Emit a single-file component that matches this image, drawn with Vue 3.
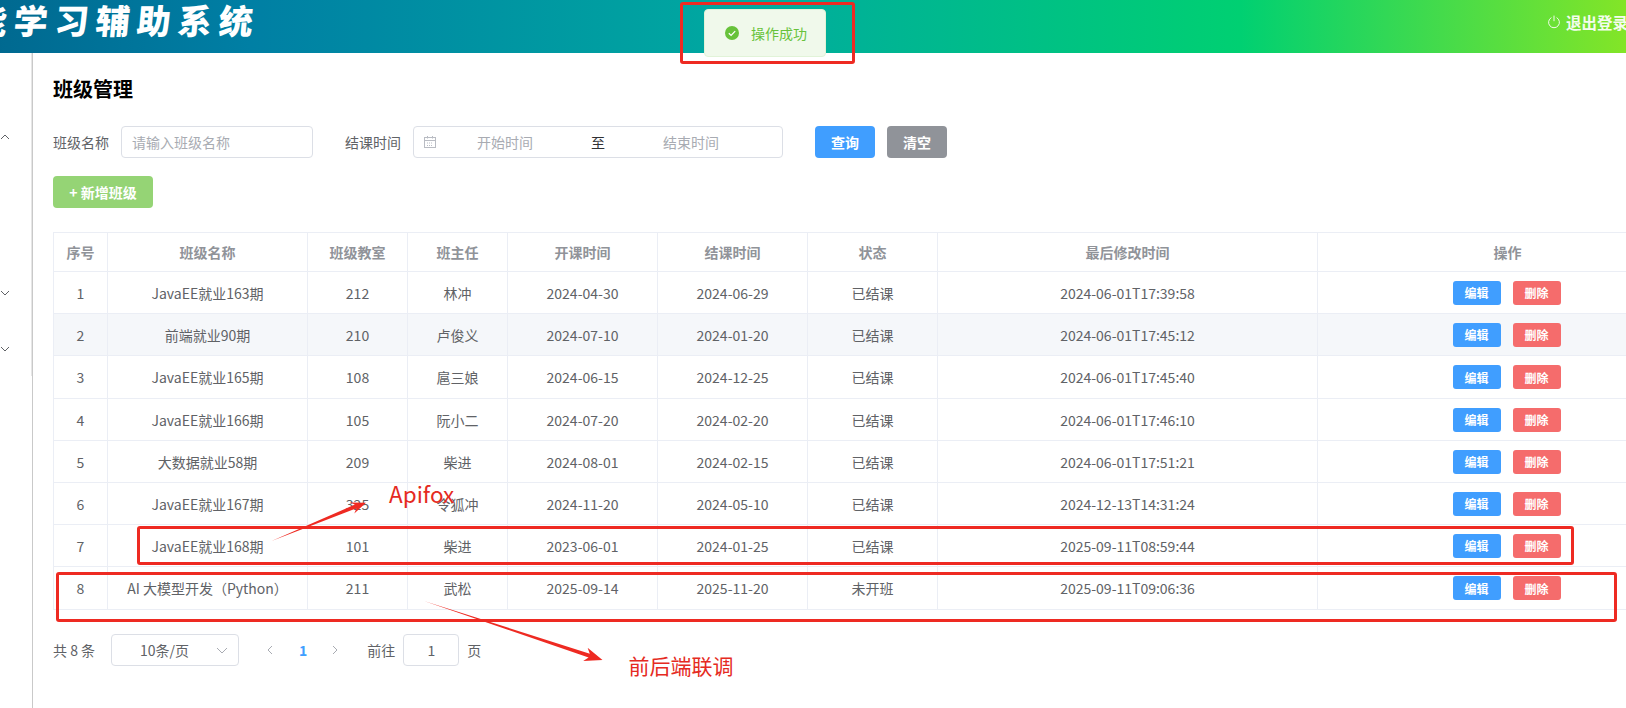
<template>
  <div class="page">
    <header class="header">
      <h1 class="brand">智能学习辅助系统</h1>
      <a class="logout">
        <svg class="power" viewBox="0 0 14 14" width="14" height="14">
          <path d="M4.4 2.6a5.4 5.4 0 1 0 5.2 0" />
          <path d="M7 0.6v5.6" />
        </svg>
        退出登录
      </a>
    </header>

    <div class="body">
      <aside class="aside">
        <svg class="chev first" viewBox="0 0 10 6" width="10" height="6"><path d="M1 5l4-4 4 4" /></svg>
        <svg class="chev second" viewBox="0 0 10 6" width="10" height="6"><path d="M1 1l4 4 4-4" /></svg>
        <svg class="chev third" viewBox="0 0 10 6" width="10" height="6"><path d="M1 1l4 4 4-4" /></svg>
      </aside>

      <main class="main">
        <h2 class="title">班级管理</h2>

        <div class="search">
          <label class="lbl">班级名称</label>
          <div class="input name-input">请输入班级名称</div>
          <label class="lbl">结课时间</label>
          <div class="range">
            <svg class="cal" viewBox="0 0 14 14" width="14" height="14">
              <rect x="1.5" y="2.5" width="11" height="10" />
              <path d="M1.5 5.5h11M4.5 1v2.5M9.500 1v2.500" />
              <path class="dots" d="M4 8h6M4 10.500h6" />
            </svg>
            <span class="range-start">开始时间</span>
            <span class="range-sep">至</span>
            <span class="range-end">结束时间</span>
          </div>
          <button class="btn primary">查询</button>
          <button class="btn gray">清空</button>
        </div>

        <button class="btn add">+ 新增班级</button>

        <table class="grid">
          <colgroup>
            <col v-for="w in colWidths" :key="w.id" :style="{ width: w.px + 'px' }" />
          </colgroup>
          <thead>
            <tr>
              <th v-for="h in heads" :key="h">{{ h }}</th>
            </tr>
          </thead>
          <tbody>
            <tr v-for="(r, i) in rows" :key="i" :class="{ striped: i === 1, tall: i === 2 || i === 7 }">
              <td>{{ i + 1 }}</td>
              <td>{{ r[0] }}</td>
              <td>{{ r[1] }}</td>
              <td>{{ r[2] }}</td>
              <td>{{ r[3] }}</td>
              <td>{{ r[4] }}</td>
              <td>{{ r[5] }}</td>
              <td>{{ r[6] }}</td>
              <td>
                <div class="ops">
                  <button class="mini edit">编辑</button>
                  <button class="mini del">删除</button>
                </div>
              </td>
            </tr>
          </tbody>
        </table>

        <div class="pager">
          <span>共 8 条</span>
          <div class="size">
            <span>10条/页</span>
            <svg class="size-chev" viewBox="0 0 12 7" width="12" height="7"><path d="M1 1l5 5 5-5" /></svg>
          </div>
          <svg class="nav prev" viewBox="0 0 6 10" width="6" height="10"><path d="M5 1L1 5l4 4" /></svg>
          <span class="cur">1</span>
          <svg class="nav next" viewBox="0 0 6 10" width="6" height="10"><path d="M1 1l4 4-4 4" /></svg>
          <span class="goto">前往</span>
          <div class="jump">1</div>
          <span class="unit">页</span>
        </div>
      </main>
    </div>

    <!-- toast and the red marks drawn on top of the screenshot -->
    <div class="toast">
      <svg viewBox="0 0 14 14" width="14" height="14">
        <circle cx="7" cy="7" r="7" fill="#67c23a" />
        <path d="M3.800 7.200l2.300 2.200 4.100-4.300" fill="none" stroke="#fff" stroke-width="1.300" />
      </svg>
      <span>操作成功</span>
    </div>
    <div class="mark mark-toast"></div>
    <div class="mark mark-row7"></div>
    <div class="mark mark-row8"></div>
    <svg class="arrows" viewBox="0 0 1626 708" width="1626" height="708">
      <polygon points="271.500,541 354.900,504.600 349.700,502.500 366,502.700 354.300,513.500 356.500,508.300" />
      <polygon points="424,601 589.800,653.700 587.600,647.700 602.500,660 583.200,660.900 588.600,657.500" />
    </svg>
    <span class="note note-api">Apifox</span>
    <span class="note note-fe">前后端联调</span>
  </div>
</template>

<script setup>
const colWidths = [54, 200, 100, 100, 150, 150, 130, 380, 380].map((px, id) => ({ id, px }))

const heads = ['序号', '班级名称', '班级教室', '班主任', '开课时间', '结课时间', '状态', '最后修改时间', '操作']

const rows = [
  ['JavaEE就业163期', '212', '林冲', '2024-04-30', '2024-06-29', '已结课', '2024-06-01T17:39:58'],
  ['前端就业90期', '210', '卢俊义', '2024-07-10', '2024-01-20', '已结课', '2024-06-01T17:45:12'],
  ['JavaEE就业165期', '108', '扈三娘', '2024-06-15', '2024-12-25', '已结课', '2024-06-01T17:45:40'],
  ['JavaEE就业166期', '105', '阮小二', '2024-07-20', '2024-02-20', '已结课', '2024-06-01T17:46:10'],
  ['大数据就业58期', '209', '柴进', '2024-08-01', '2024-02-15', '已结课', '2024-06-01T17:51:21'],
  ['JavaEE就业167期', '325', '令狐冲', '2024-11-20', '2024-05-10', '已结课', '2024-12-13T14:31:24'],
  ['JavaEE就业168期', '101', '柴进', '2023-06-01', '2024-01-25', '已结课', '2025-09-11T08:59:44'],
  ['AI 大模型开发（Python）', '211', '武松', '2025-09-14', '2025-11-20', '未开班', '2025-09-11T09:06:36']
]
</script>

<style>
html,
body {
  margin: 0;
  background: #fff;
}
</style>

<style scoped>
.page {
  position: relative;
  width: 1626px;
  height: 708px;
  overflow: hidden;
  font-family: "Noto Sans CJK SC", "Noto Sans", sans-serif;
  font-size: 14px;
  color: #606266;
  background: #fff;
}

.header {
  display: flex;
  align-items: center;
  width: 1980px;
  height: 53px;
  margin-left: -245px;
  background: linear-gradient(to right, #00547d, #007fa4, #00aaa0, #00d072, #a8eb12);
}
.brand {
  margin: 0 0 14px 177px;
  font-size: 34px;
  font-weight: 900;
  letter-spacing: 7px;
  white-space: nowrap;
  line-height: 53px;
  color: #fff;
  transform: skewX(-5deg);
}
.logout {
  display: flex;
  align-items: center;
  gap: 5px;
  margin-left: auto;
  margin-right: 107px;
  margin-top: -9px;
  font-size: 15.500px;
  font-weight: 700;
  color: #fff;
  opacity: 0.92;
  white-space: nowrap;
}
.power path {
  fill: none;
  stroke: #fff;
  stroke-width: 1;
}

.body {
  display: flex;
  align-items: flex-start;
}
.aside {
  display: flex;
  flex-direction: column;
  align-items: flex-start;
  box-sizing: border-box;
  width: 32px;
  height: 323px;
  border-right: 1px solid #e6e6e6;
}
.chev path {
  fill: none;
  stroke: #606266;
  stroke-width: 1;
}
.chev.first {
  margin-top: 81px;
}
.chev.second {
  margin-top: 150px;
}
.chev.third {
  margin-top: 50px;
}

.main {
  box-sizing: border-box;
  width: 1594px;
  min-height: 655px;
  padding: 24px 0 0 20px;
  border-left: 1px solid #c9c9c9;
}
.title {
  margin: 0 0 25px;
  font-size: 20px;
  line-height: 24px;
  font-weight: 700;
  color: #000;
}

.search {
  display: flex;
  align-items: center;
  height: 32px;
}
.lbl {
  width: 56px;
  margin-right: 12px;
  white-space: nowrap;
}
.input {
  box-sizing: border-box;
  width: 192px;
  height: 32px;
  margin-right: 32px;
  padding: 0 10px;
  border: 1px solid #dcdfe6;
  border-radius: 4px;
  line-height: 30px;
  color: #a8abb2;
}
.range {
  position: relative;
  display: flex;
  align-items: center;
  box-sizing: border-box;
  width: 370px;
  height: 32px;
  margin-right: 32px;
  border: 1px solid #dcdfe6;
  border-radius: 4px;
  color: #a8abb2;
}
.cal {
  margin-left: 9px;
}
.cal rect,
.cal path {
  fill: none;
  stroke: #b9bcc3;
  stroke-width: 1;
}
.cal .dots {
  stroke-dasharray: 1 1;
}
.range-start {
  margin-left: 40px;
}
.range-sep {
  margin-left: 58px;
  color: #303133;
}
.range-end {
  margin-left: 58px;
}

.btn {
  box-sizing: border-box;
  height: 32px;
  border: 0;
  border-radius: 4px;
  font: inherit;
  font-weight: 700;
  color: #fff;
  padding: 0;
}
.btn.primary {
  width: 60px;
  margin-right: 12px;
  background: #409eff;
}
.btn.gray {
  width: 60px;
  background: #909399;
}
.btn.add {
  display: block;
  width: 100px;
  margin-top: 18px;
  background: #95d475;
}

.grid {
  width: 1644px;
  margin-top: 24px;
  table-layout: fixed;
  border-collapse: collapse;
  border-top: 1px solid #ebeef5;
  border-left: 1px solid #ebeef5;
}
.grid th,
.grid td {
  padding: 0;
  border-right: 1px solid #ebeef5;
  border-bottom: 1px solid #ebeef5;
  text-align: center;
  font-weight: 400;
}
.grid th {
  height: 38px;
  font-weight: 700;
  color: #909399;
}
.grid td {
  height: 41px;
}
.grid .tall td {
  height: 42px;
}
.striped td {
  background: #f5f7fa;
}
.ops {
  display: flex;
  justify-content: center;
  gap: 12px;
  padding-right: 2px;
}
.mini {
  box-sizing: border-box;
  width: 48px;
  height: 24px;
  padding: 0;
  border: 0;
  border-radius: 3px;
  font: inherit;
  font-size: 12px;
  font-weight: 700;
  color: #fff;
}
.mini.edit {
  background: #409eff;
}
.mini.del {
  background: #f56c6c;
}

.pager {
  display: flex;
  align-items: center;
  height: 32px;
  margin-top: 24px;
}
.size {
  display: flex;
  align-items: center;
  box-sizing: border-box;
  width: 128px;
  height: 32px;
  margin-left: 16px;
  padding-left: 28px;
  border: 1px solid #dcdfe6;
  border-radius: 4px;
}
.size-chev {
  margin-left: 27px;
}
.size-chev path,
.nav path {
  fill: none;
  stroke: #a8abb2;
  stroke-width: 1;
}
.prev {
  margin-left: 28px;
}
.cur {
  margin-left: 26px;
  font-weight: 700;
  color: #409eff;
}
.next {
  margin-left: 25px;
}
.goto {
  margin-left: 29px;
}
.jump {
  box-sizing: border-box;
  width: 56px;
  height: 32px;
  margin-left: 8px;
  border: 1px solid #dcdfe6;
  border-radius: 4px;
  line-height: 30px;
  text-align: center;
}
.unit {
  margin-left: 8px;
}

.toast {
  position: absolute;
  left: 704px;
  top: 9px;
  display: flex;
  align-items: center;
  box-sizing: border-box;
  width: 122px;
  height: 48px;
  padding-left: 20px;
  gap: 12px;
  border: 1px solid #e1f3d8;
  border-radius: 4px;
  background: #f0f9eb;
  color: #67c23a;
}
.mark {
  position: absolute;
  box-sizing: border-box;
  border: 3px solid #ee2a22;
  border-radius: 3px;
}
.mark-toast {
  left: 680px;
  top: 2px;
  width: 175px;
  height: 62px;
}
.mark-row7 {
  left: 137px;
  top: 526px;
  width: 1437px;
  height: 39px;
}
.mark-row8 {
  left: 56px;
  top: 572px;
  width: 1561px;
  height: 50px;
}
.arrows {
  position: absolute;
  left: 0;
  top: 0;
  pointer-events: none;
}
.arrows polygon {
  fill: #ee2a22;
}
.note {
  position: absolute;
  color: #e52a22;
  font-size: 21px;
  line-height: 28px;
  white-space: nowrap;
}
.note-api {
  left: 389px;
  top: 479px;
  font-size: 22.500px;
}
.note-fe {
  left: 628.500px;
  top: 651px;
}
</style>
